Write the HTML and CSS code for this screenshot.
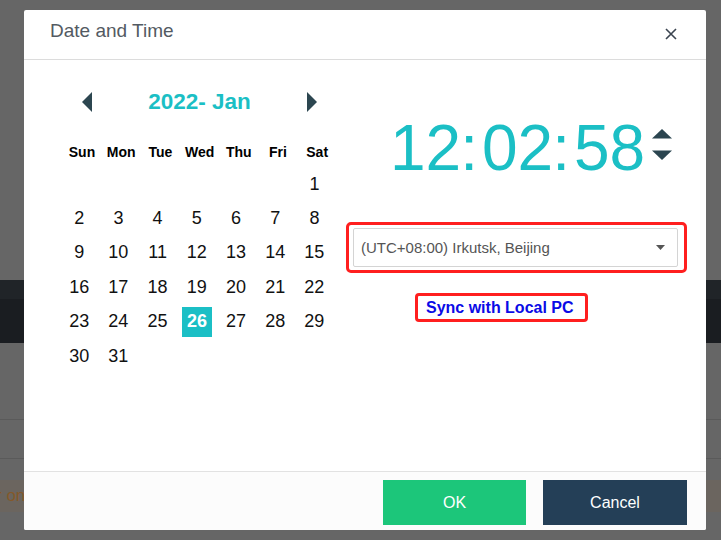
FILE: index.html
```html
<!DOCTYPE html>
<html>
<head>
<meta charset="utf-8">
<link rel="stylesheet" href="styles.css">
</head>
<body>
<div class="page">
  <div class="bg-top"></div>
  <div class="navbar-a"></div>
  <div class="navbar-b"></div>
  <div class="gap-a"></div>
  <div class="rule"></div>
  <div class="gap-b"></div>
  <div class="rule"></div>
  <div class="gap-c"></div>
  <div class="notice">r one</div>
</div>

<div class="modal">
  <div class="modal-header">
    <div class="modal-title">Date and Time</div>
    <svg class="close" width="12" height="12" viewBox="0 0 12 12"><path d="M1 1L11 11M11 1L1 11" stroke="#3b4450" stroke-width="1.6" fill="none"/></svg>
  </div>
  <div class="modal-body">
    <div class="calendar">
      <div class="cal-nav">
        <svg class="nav-arrow" width="10" height="20" viewBox="0 0 10 20"><path d="M10 0L0 10L10 20Z" fill="#2c4650"/></svg>
        <div class="cal-title">2022- Jan</div>
        <svg class="nav-arrow" width="10" height="20" viewBox="0 0 10 20"><path d="M0 0L10 10L0 20Z" fill="#2c4650"/></svg>
      </div>
      <div class="weekdays">
        <span>Sun</span><span>Mon</span><span>Tue</span><span>Wed</span><span>Thu</span><span>Fri</span><span>Sat</span>
      </div>
      <div class="days">
        <span></span><span></span><span></span><span></span><span></span><span></span><span>1</span>
        <span>2</span><span>3</span><span>4</span><span>5</span><span>6</span><span>7</span><span>8</span>
        <span>9</span><span>10</span><span>11</span><span>12</span><span>13</span><span>14</span><span>15</span>
        <span>16</span><span>17</span><span>18</span><span>19</span><span>20</span><span>21</span><span>22</span>
        <span>23</span><span>24</span><span>25</span><span class="today"><b>26</b></span><span>27</span><span>28</span><span>29</span>
        <span>30</span><span>31</span>
      </div>
    </div>
    <div class="clock">
      <div class="time-row">
        <div class="time">
          <span>12</span><span class="colon">:</span><span>02</span><span class="colon">:</span><span>58</span>
        </div>
        <div class="spin">
          <svg width="20" height="10" viewBox="0 0 20 10"><path d="M10 0L20 9.5H0Z" fill="#2b4550"/></svg>
          <svg width="20" height="10" viewBox="0 0 20 10"><path d="M0 0.5H20L10 10Z" fill="#2b4550"/></svg>
        </div>
      </div>
      <div class="tz-mark">
        <div class="tz-select">
          <span>(UTC+08:00) Irkutsk, Beijing</span>
          <svg width="9" height="5" viewBox="0 0 9 5"><path d="M0 0H9L4.5 5Z" fill="#555"/></svg>
        </div>
      </div>
      <div class="sync-mark">Sync with Local PC</div>
    </div>
  </div>
  <div class="modal-footer">
    <button class="btn btn-ok">OK</button>
    <button class="btn btn-cancel">Cancel</button>
  </div>
</div>
</body>
</html>
```

FILE: styles.css
```css
html, body {
  margin: 0;
  padding: 0;
}
body {
  width: 721px;
  height: 540px;
  overflow: hidden;
  background: #666666;
  font-family: "Liberation Sans", Arial, sans-serif;
  position: relative;
}
.page {
  display: flex;
  flex-direction: column;
}
.bg-top { height: 280px; }
.navbar-a { height: 19px; background: #202428; }
.navbar-b { height: 44px; background: #1a1d21; }
.gap-a { height: 76px; }
.rule { height: 1px; background: #5a5a5a; }
.gap-b { height: 38px; }
.gap-c { height: 21px; }
.notice {
  height: 32px;
  background: #6b655f;
  color: #84592a;
  font-size: 17px;
  line-height: 32px;
  text-indent: -4px;
  white-space: nowrap;
}

.modal {
  position: absolute;
  left: 24px;
  top: 10px;
  width: 682px;
  height: 520px;
  background: #fff;
  border-radius: 2px;
  display: flex;
  flex-direction: column;
  overflow: hidden;
}
.modal-header {
  height: 50px;
  box-sizing: border-box;
  border-bottom: 1px solid #dcdcdc;
  padding: 10px 29px 0 26px;
  display: flex;
  justify-content: space-between;
  align-items: flex-start;
}
.modal-title {
  font-size: 19px;
  line-height: 22px;
  color: #535a62;
}
.close {
  margin-top: 8px;
}
.modal-body {
  flex: 1;
  display: flex;
  padding-top: 31px;
}
.calendar {
  margin-left: 38.4px;
  width: 274.4px;
}
.cal-nav {
  height: 22px;
  padding: 0 19.6px;
  display: flex;
  justify-content: space-between;
  align-items: center;
}
.cal-title {
  font-size: 22.5px;
  font-weight: bold;
  color: #1bbfc5;
  line-height: 22px;
}
.weekdays {
  margin-top: 24px;
  display: grid;
  grid-template-columns: repeat(7, 1fr);
  height: 30px;
  align-items: center;
  text-align: center;
  font-size: 14px;
  font-weight: bold;
  color: #000;
}
.days {
  margin-left: -2.8px;
  width: 274.4px;
  display: grid;
  grid-template-columns: repeat(7, 1fr);
  grid-auto-rows: 34.4px;
  align-items: center;
  justify-items: center;
  font-size: 18px;
  color: #111;
}
.today {
  width: 30px;
  height: 30px;
  background: #1bbfc5;
  color: #fff;
  display: flex;
  align-items: center;
  justify-content: center;
  margin-left: 0.6px;
}
.clock {
  margin-left: 9.2px;
  width: 341px;
  display: flex;
  flex-direction: column;
}
.time-row {
  margin-top: 24.7px;
  padding-left: 44px;
  display: flex;
  align-items: center;
}
.time {
  font-size: 64px;
  line-height: 64px;
  color: #1bbfc5;
  white-space: nowrap;
}
.colon {
  margin: 0 4px 0 -1px;
}
.spin {
  margin-left: 7px;
  margin-top: -6px;
  display: flex;
  flex-direction: column;
  gap: 11px;
}
.spin svg { display: block; }
.tz-mark {
  margin-top: 42.3px;
  border: 3px solid #ff1f1f;
  border-radius: 5px;
  padding: 3px 6px 3px 4px;
}
.tz-select {
  height: 39px;
  box-sizing: border-box;
  border: 1px solid #d4d4d4;
  border-radius: 2px;
  padding: 0 12px 0 7px;
  display: flex;
  align-items: center;
  justify-content: space-between;
  font-size: 15px;
  color: #555;
}
.sync-mark {
  align-self: flex-start;
  margin-left: 69px;
  margin-top: 20px;
  border: 3px solid #ff1f1f;
  border-radius: 4px;
  height: 29px;
  box-sizing: border-box;
  padding: 0 11px 0 8px;
  font-size: 16px;
  font-weight: bold;
  line-height: 23px;
  color: #0a0ae6;
}
.modal-footer {
  height: 59px;
  box-sizing: border-box;
  border-top: 1px solid #e2e2e2;
  background: #fcfcfc;
  padding: 8px 19px 0 0;
  display: flex;
  justify-content: flex-end;
  gap: 17px;
}
.btn {
  width: 143px;
  height: 45px;
  border: none;
  border-radius: 0;
  font-family: "Liberation Sans", Arial, sans-serif;
  font-size: 16px;
  color: #fff;
  padding: 0;
}
.btn-ok { background: #1cc67a; }
.btn-cancel { background: #243f57; width: 144px; }
```
